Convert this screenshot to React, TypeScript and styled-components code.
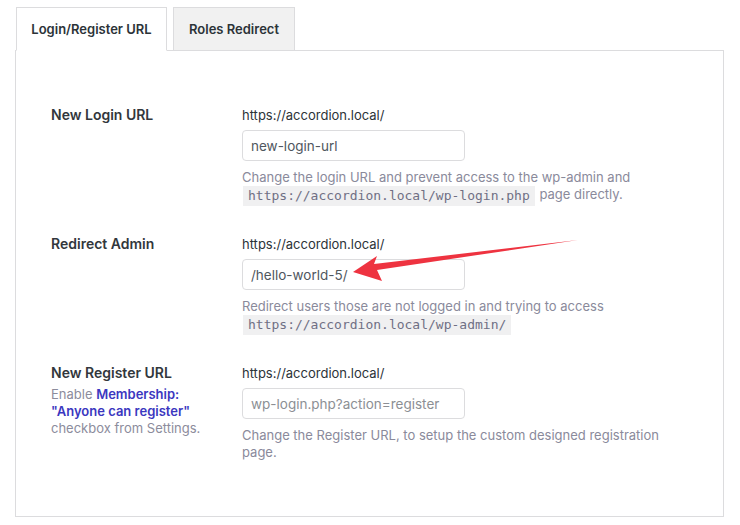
import React from "react";
import styled, { createGlobalStyle } from "styled-components";

const Global = createGlobalStyle`
  html, body { margin: 0; padding: 0; background: #fff; }
  body { font-family: Inter, "Noto Sans", sans-serif; -webkit-font-smoothing: antialiased; }
  * { box-sizing: border-box; }
`;

const Page = styled.div`
  position: relative;
  width: 740px;
  height: 525px;
  padding: 7px 16px 0 15px;
`;

const TabBar = styled.div`
  display: flex;
  gap: 6px;
  padding-left: 1px;
  position: relative;
  z-index: 1;
`;

const Tab = styled.div<{ $active?: boolean }>`
  height: 44px;
  display: flex;
  align-items: center;
  padding: 0 14px;
  font-size: 13px;
  font-weight: 600;
  color: #2c3338;
  border: 1px solid #dcdcde;
  border-bottom-color: ${(p) => (p.$active ? "#fff" : "#dcdcde")};
  background: ${(p) => (p.$active ? "#fff" : "#f1f1f1")};
  width: ${(p) => (p.$active ? "151px" : "122px")};
  justify-content: center;
`;

const Panel = styled.div`
  margin-top: -1px;
  border: 1px solid #dcdcde;
  height: 467px;
  padding: 54px 20px 0 35px;
  display: flex;
  flex-direction: column;
  gap: 28px;
`;

const Row = styled.div`
  display: grid;
  grid-template-columns: 191px 1fr;
`;

const LabelCol = styled.div`
  display: flex;
  flex-direction: column;
  gap: 3px;
`;

const Label = styled.div`
  font-size: 14px;
  font-weight: 600;
  line-height: 20px;
  color: #32373c;
`;

const LabelNote = styled.div`
  font-size: 13px;
  line-height: 17px;
  color: #8c8c9c;
  width: 160px;
`;

const Strong = styled.strong`
  color: #3b37c0;
  font-weight: 600;
`;

const FieldCol = styled.div`
  display: flex;
  flex-direction: column;
`;

const Prefix = styled.div`
  font-size: 13px;
  line-height: 20px;
  color: #2c3338;
`;

const Input = styled.input<{ $placeholderish?: boolean }>`
  margin-top: 5px;
  width: 223px;
  height: 31px;
  border: 1px solid #dcdcde;
  border-radius: 4px;
  padding: 0 8px;
  font-family: inherit;
  font-size: 13.5px;
  color: ${(p) => (p.$placeholderish ? "#8c8f94" : "#50575e")};
  background: #fff;
  outline: none;
`;

const Desc = styled.p`
  margin: 8px 0 0;
  font-size: 13px;
  line-height: 17px;
  color: #8a8a9b;
  max-width: 420px;
`;

const Code = styled.code`
  display: inline-block;
  font-family: "DejaVu Sans Mono", "Liberation Mono", monospace;
  font-size: 13px;
  line-height: 20px;
  padding: 0 5px;
  margin: 0 1px;
  background: #f0f0f1;
  color: #6f6f84;
  vertical-align: top;
`;

const Arrow = styled.svg`
  position: absolute;
  left: 0;
  top: 0;
  pointer-events: none;
`;

export default function App() {
  return (
    <Page>
      <Global />
      <TabBar>
        <Tab $active>Login/Register URL</Tab>
        <Tab>Roles Redirect</Tab>
      </TabBar>
      <Panel>
        <Row>
          <LabelCol>
            <Label>New Login URL</Label>
          </LabelCol>
          <FieldCol>
            <Prefix>https://accordion.local/</Prefix>
            <Input defaultValue="new-login-url" />
            <Desc>
              Change the login URL and prevent access to the wp-admin and{" "}
              <Code>https://accordion.local/wp-login.php</Code> page directly.
            </Desc>
          </FieldCol>
        </Row>
        <Row>
          <LabelCol>
            <Label>Redirect Admin</Label>
          </LabelCol>
          <FieldCol>
            <Prefix>https://accordion.local/</Prefix>
            <Input defaultValue="/hello-world-5/" />
            <Desc>
              Redirect users those are not logged in and trying to access{" "}
              <Code>https://accordion.local/wp-admin/</Code>
            </Desc>
          </FieldCol>
        </Row>
        <Row>
          <LabelCol>
            <Label>New Register URL</Label>
            <LabelNote>
              Enable <Strong>Membership:</Strong> <Strong>"Anyone can register"</Strong>{" "}
              checkbox from Settings.
            </LabelNote>
          </LabelCol>
          <FieldCol>
            <Prefix>https://accordion.local/</Prefix>
            <Input $placeholderish defaultValue="wp-login.php?action=register" />
            <Desc>
              Change the Register URL, to setup the custom designed registration page.
            </Desc>
          </FieldCol>
        </Row>
      </Panel>
      <Arrow width="740" height="525" viewBox="0 0 740 525">
        <polygon
          points="353,272 377,256 374,264 578,240 377,270 382,281"
          fill="#ee3340"
        />
      </Arrow>
    </Page>
  );
}
